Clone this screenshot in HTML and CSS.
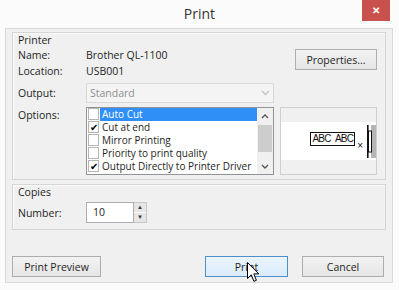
FILE: index.html
```html
<!DOCTYPE html>
<html lang="en">
<head>
  <meta charset="UTF-8" />
  <title>Print</title>
  <link rel="stylesheet" href="styles.css">
</head>
<body>
  <div class="window">
    <div class="titlebar">
      <span></span>
      <span class="title">Print</span>
      <span class="close">&#x2715;</span>
    </div>

    <div class="client">
      <!-- Printer group -->
      <div class="group printer">
        <div class="group-title">Printer</div>
        <div class="printer-grid">
          <span class="label">Name:</span>
          <span class="value">Brother QL-1100</span>
          <button class="btn props">Properties...</button>

          <span class="label">Location:</span>
          <span class="value">USB001</span>

          <span class="label output-label">Output:</span>
          <div class="select">
            <span>Standard</span>
            <svg width="9" height="6" viewBox="0 0 9 6"><path d="M1 1 L4.5 4.5 L8 1" fill="none" stroke="#c4c4c4" stroke-width="1.3"/></svg>
          </div>
          <span></span>

          <span class="label options-label">Options:</span>
          <div class="list">
            <div class="items">
              <div class="item"><span class="check"></span><span class="text selected">Auto Cut</span></div>
              <div class="item"><span class="check on">&#x2714;</span><span class="text">Cut at end</span></div>
              <div class="item"><span class="check"></span><span class="text">Mirror Printing</span></div>
              <div class="item"><span class="check"></span><span class="text">Priority to print quality</span></div>
              <div class="item"><span class="check on">&#x2714;</span><span class="text">Output Directly to Printer Driver</span></div>
            </div>
            <div class="scrollbar">
              <div class="sb-btn">
                <svg width="8" height="5" viewBox="0 0 8 5"><path d="M1 4 L4 1 L7 4" fill="none" stroke="#555" stroke-width="1.3"/></svg>
              </div>
              <div class="sb-thumb"></div>
              <div class="sb-track"></div>
              <div class="sb-btn">
                <svg width="8" height="5" viewBox="0 0 8 5"><path d="M1 1 L4 4 L7 1" fill="none" stroke="#555" stroke-width="1.3"/></svg>
              </div>
            </div>
          </div>
          <div class="preview">
            <div class="tape">
              <span class="tape-label">ABC ABC</span>
              <span class="tape-x">&#xd7;</span>
              <svg class="cutter" width="10" height="33" viewBox="0 0 10 33">
                <rect x="5" y="0" width="5" height="33" fill="#b4b4b4"/>
                <rect x="1" y="0" width="1.6" height="33" fill="#111"/>
                <rect x="2.5" y="6" width="3" height="21" fill="#fff" stroke="#111" stroke-width="1"/>
              </svg>
            </div>
          </div>
        </div>
      </div>

      <!-- Copies group -->
      <div class="group copies">
        <div class="group-title">Copies</div>
        <div class="copies-row">
          <span class="label">Number:</span>
          <div class="spinner">
            <span class="spin-value">10</span>
            <div class="spin-btns">
              <span class="spin-btn">&#x25b2;</span>
              <span class="spin-btn">&#x25bc;</span>
            </div>
          </div>
        </div>
      </div>

      <div class="actions">
        <button class="btn preview-btn">Print Preview</button>
        <span class="spacer"></span>
        <button class="btn print-btn">Print</button>
        <button class="btn cancel-btn">Cancel</button>
      </div>
    </div>

    <!-- mouse pointer over the Print button -->
    <svg class="cursor" width="13" height="21" viewBox="0 0 13 21">
      <path d="M0.5 0.5 L0.5 16.5 L4.3 12.8 L6.9 19.3 L9.4 18.3 L6.8 11.9 L11.8 11.9 Z" fill="#fff" stroke="#000" stroke-width="1"/>
    </svg>
  </div>
</body>
</html>
```

FILE: styles.css
```css
body {
  margin: 0;
  background: #fbfbfb;
  font-family: "Open Sans", "Noto Sans", sans-serif;
  font-size: 10.5px;
  color: #1e1e1e;
}

.window {
  position: relative;
  width: 399px;
  height: 290px;
  overflow: hidden;
}

.titlebar {
  height: 28px;
  display: grid;
  grid-template-columns: 1fr auto 1fr;
  align-items: start;
}

.title {
  font-size: 14px;
  line-height: 28px;
  color: #333;
}

.close {
  justify-self: end;
  width: 28px;
  height: 21px;
  margin-right: 9px;
  background: #c9514c;
  color: #fff;
  font-size: 10px;
  font-weight: bold;
  line-height: 21px;
  text-align: center;
}

.client {
  box-sizing: border-box;
  margin-left: 5px;
  width: 388px;
  border: 1px solid #dadada;
  background: #f0f0f0;
  padding: 3px 6px 5px 6px;
}

.group {
  border: 1px solid #d5d5d5;
  box-shadow: inset 1px 1px 0 #fbfbfb;
  padding: 0 8px 0 5px;
}

.group-title {
  line-height: 14px;
}

/* Printer group grid */
.printer {
  padding-bottom: 4px;
}

.printer-grid {
  display: grid;
  grid-template-columns: 68px 194px 97px;
  grid-template-rows: 16px 16px 24px 72px;
}

.label {
  line-height: 16px;
}

.value {
  line-height: 16px;
}

.props {
  grid-column: 3;
  grid-row: 1 / span 2;
  justify-self: end;
  align-self: start;
  width: 82px;
  margin-top: 2px;
}

.output-label {
  align-self: end;
  line-height: 20px;
}

.select {
  align-self: end;
  width: 188px;
  height: 20px;
  box-sizing: border-box;
  border: 1px solid #d9d9d9;
  background: #f4f4f4;
  color: #8e8e8e;
  display: flex;
  align-items: center;
  justify-content: space-between;
  padding: 0 3px 0 3px;
}

.options-label {
  margin-top: 4px;
}

/* Options list */
.list {
  align-self: end;
  width: 188px;
  height: 68px;
  box-sizing: border-box;
  border: 1px solid #8f9297;
  background: #fff;
  display: flex;
}

.items {
  flex: 1;
  overflow: hidden;
  font-size: 10px;
}

.item {
  display: flex;
  height: 13px;
  line-height: 13px;
  white-space: nowrap;
}

.check {
  width: 11px;
  height: 12px;
  margin-left: 1px;
  border: 1px solid #b5b5b5;
  background: #fff;
  box-sizing: border-box;
  color: #000;
  font-size: 10px;
  line-height: 11px;
  text-align: center;
  flex: none;
}

.text {
  flex: 1;
  padding-left: 2px;
  margin-left: 1px;
}

.text.selected {
  background: #2f8ff6;
  color: #fff;
}

.scrollbar {
  width: 16px;
  background: #f0f0f0;
  display: flex;
  flex-direction: column;
}

.sb-btn {
  height: 16px;
  display: flex;
  align-items: center;
  justify-content: center;
}

.sb-thumb {
  height: 27px;
  margin: 1px 1px 0 1px;
  background: #cdcdcd;
}

.sb-track {
  flex: 1;
}

/* Label preview */
.preview {
  align-self: end;
  height: 68px;
  box-sizing: border-box;
  border: 1px solid #cfcfcf;
  background: #f0f0f0;
}

.tape {
  margin-top: 14px;
  height: 38px;
  background: #fff;
  display: flex;
  align-items: center;
  justify-content: flex-end;
}

.tape-label {
  border: 1px solid #111;
  padding: 0 1px;
  height: 14px;
  box-sizing: border-box;
  font-family: "Liberation Sans", Arial, sans-serif;
  font-size: 10px;
  line-height: 12px;
  letter-spacing: -0.8px;
  word-spacing: 3px;
  color: #111;
  margin-top: -4px;
}

.tape-x {
  font-family: "Liberation Sans", Arial, sans-serif;
  font-size: 10px;
  margin: 10px 3px 0 2px;
  line-height: 10px;
  color: #111;
}

/* Copies group */
.copies {
  margin-top: 4px;
  padding-bottom: 6px;
}

.copies-row {
  display: flex;
  margin-top: 3px;
  height: 21px;
  align-items: center;
}

.copies-row .label {
  width: 68px;
}

.spinner {
  display: flex;
  height: 21px;
}

.spin-value {
  width: 48px;
  box-sizing: border-box;
  border: 1px solid #abadb3;
  background: #fff;
  padding-left: 6px;
  line-height: 19px;
}

.spin-btns {
  width: 13px;
  display: flex;
  flex-direction: column;
  border: 1px solid #c8c8c8;
  border-left: none;
  box-sizing: border-box;
}

.spin-btn {
  flex: 1;
  background: #e6e6e6;
  font-size: 6px;
  line-height: 9px;
  text-align: center;
  color: #333;
}

.spin-btn + .spin-btn {
  border-top: 1px solid #fafafa;
}

/* Bottom buttons */
.actions {
  display: flex;
  margin-top: 26px;
  padding-right: 2px;
}

.spacer {
  flex: 1;
}

.btn {
  height: 21px;
  box-sizing: border-box;
  border: 1px solid #adadad;
  background: linear-gradient(#f2f2f2, #e6e6e6);
  font-family: inherit;
  font-size: 10.5px;
  color: #1e1e1e;
  padding: 0;
}

.preview-btn {
  width: 89px;
}

.print-btn {
  width: 83px;
  border-color: #4d8fc9;
  background: linear-gradient(#eaf4fc, #dcecfc);
}

.cancel-btn {
  width: 82px;
  margin-left: 14px;
}

.cursor {
  position: absolute;
  left: 247px;
  top: 262px;
}
```
